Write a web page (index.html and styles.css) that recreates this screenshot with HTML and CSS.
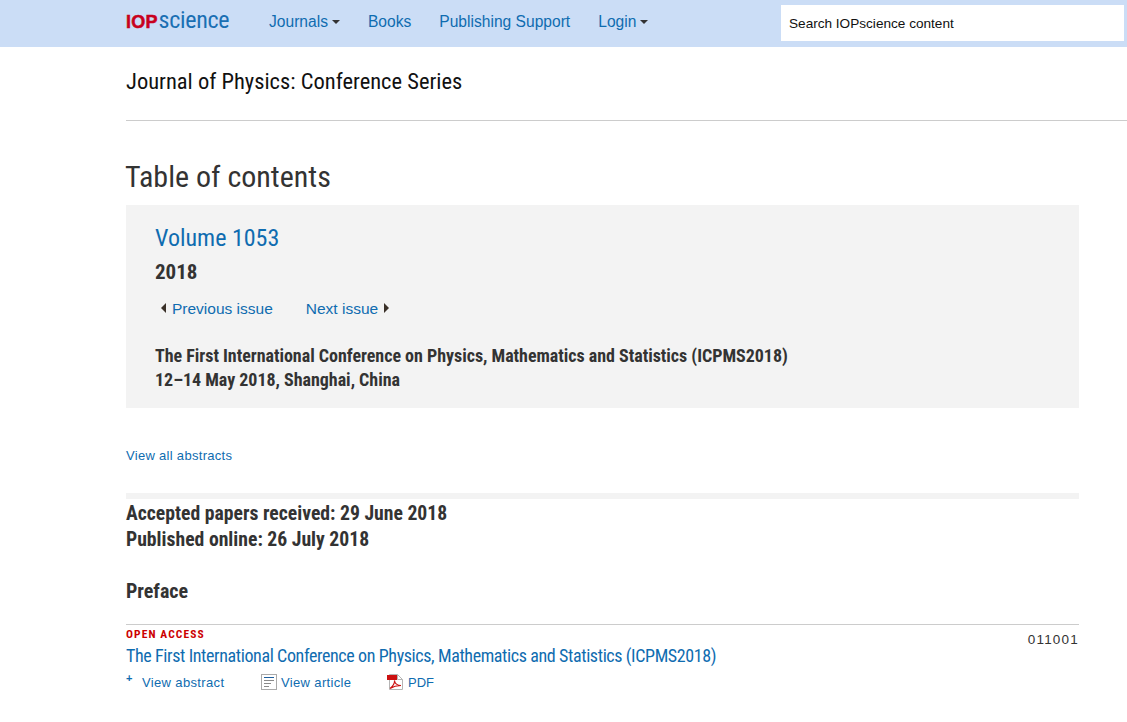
FILE: index.html
```html
<!DOCTYPE html>
<html lang="en">
<head>
<meta charset="utf-8">
<title>Journal of Physics: Conference Series - Table of contents</title>
<link rel="stylesheet" href="styles.css">
</head>
<body>
<header class="topbar">
  <a class="logo" href="#"><span class="logo-iop">IOP</span><span class="logo-sci">science</span></a>
  <nav class="nav">
    <a href="#">Journals<i class="caret"></i></a>
    <a href="#">Books</a>
    <a href="#">Publishing Support</a>
    <a href="#">Login<i class="caret"></i></a>
  </nav>
  <div class="search">Search IOPscience content</div>
</header>
<main class="page">
  <div class="journal">Journal of Physics: Conference Series</div>
  <h1 class="title">Table of contents</h1>
  <section class="issue">
    <h2 class="volume">Volume 1053</h2>
    <div class="year">2018</div>
    <div class="pager">
      <a href="#"><i class="tri-left"></i>Previous issue</a>
      <a href="#">Next issue<i class="tri-right"></i></a>
    </div>
    <div class="conf">The First International Conference on Physics, Mathematics and Statistics (ICPMS2018)<br>12–14 May 2018, Shanghai, China</div>
  </section>
  <a class="all" href="#">View all abstracts</a>
  <div class="rule"></div>
  <div class="dates">Accepted papers received: 29 June 2018<br>Published online: 26 July 2018</div>
  <h3 class="section">Preface</h3>
  <article class="paper">
    <div class="paper-head">
      <div class="oa">OPEN ACCESS</div>
      <div class="num">011001</div>
    </div>
    <a class="paper-title" href="#">The First International Conference on Physics, Mathematics and Statistics (ICPMS2018)</a>
    <div class="links">
      <a class="l-abs" href="#"><span class="plus">+</span>View abstract</a>
      <a class="l-art" href="#"><svg width="16" height="16" viewBox="0 0 16 16"><rect x="0.5" y="0.5" width="15" height="15" fill="#fff" stroke="#aaa"/><path d="M3 3.500h10" stroke="#1f5f9e" fill="none"/><path d="M3 6.500h10M3 9.500h7M3 12.500h5" stroke="#8a8a8a" fill="none"/></svg>View article</a>
      <a class="l-pdf" href="#"><svg width="16" height="16" viewBox="0 0 16 16"><path d="M2.500.5h8l5 5v10h-13z" fill="#fff" stroke="#b5b5b5"/><path d="M10.500.5v5h5" fill="none" stroke="#b5b5b5"/><rect x="0" y="1" width="10" height="5" fill="#cc1111"/><path d="M3 14.500c3-2 5-6 4.500-8 0 3 3 5 6.500 5-3 0-7.500.8-11 3z" fill="none" stroke="#cc1111" stroke-width="1.200"/></svg>PDF</a>
    </div>
  </article>
</main>
</body>
</html>
```
FILE: styles.css
```css
* { box-sizing: border-box; }
html, body { margin: 0; padding: 0; height: 722px; overflow: hidden; }
body { background: #fff; color: #333; font-family: "Liberation Sans", Arial, sans-serif; }
a { color: #0f6cb0; text-decoration: none; }
i { display: inline-block; }

.topbar { height: 47px; background: #cbddf6; display: flex; align-items: flex-start; padding-left: 126px; }
.logo { display: flex; align-items: baseline; width: 143px; padding-top: 7px; line-height: 27px; }
.logo-iop { color: #c8001e; font-weight: 900; font-size: 18px; font-family: "Liberation Sans", sans-serif; letter-spacing: .2px; -webkit-text-stroke: .5px #c8001e; margin-right: 1px; }
.logo-sci { color: #1a6fb3; font-size: 24px; font-family: "Roboto", sans-serif; font-stretch: 75%; letter-spacing: -.3px; }
.nav { display: flex; gap: 28px; width: 512px; padding-top: 13px; font-size: 15.6px; line-height: 18px; }
.caret { width: 0; height: 0; border: 4px solid transparent; border-top: 4px solid #333; border-bottom: 0; margin-left: 4px; vertical-align: 3px; }
.search { width: 343px; height: 36px; margin-top: 5px; background: #fff; color: #111; font-size: 13.6px; line-height: 37px; padding-left: 8px; }

.page { padding-left: 126px; }
.journal { height: 74px; padding-top: 20px; border-bottom: 1px solid #ccc; font-family: "Roboto", sans-serif; font-stretch: 75%; font-size: 22.5px; line-height: 28px; color: #111; }
.title { margin: 38px 0 10px -1px; height: 36px; font-family: "Roboto", sans-serif; font-stretch: 75%; font-weight: 400; font-size: 30px; line-height: 36px; color: #333; }
.issue { width: 953px; height: 203px; background: #f3f3f3; padding: 17px 29px 0; }
.volume { margin: 0; font-family: "Roboto", sans-serif; font-stretch: 75%; font-weight: 400; font-size: 24px; line-height: 32px; color: #0f6cb0; }
.year { margin-top: 6px; font-family: "Roboto", sans-serif; font-stretch: 75%; font-weight: 700; font-size: 21px; line-height: 24px; color: #333; }
.pager { display: flex; gap: 33px; margin-top: 15px; font-size: 15.5px; line-height: 20px; padding-left: 6px; }
.tri-left { width: 0; height: 0; border: 5px solid transparent; border-left: 0; border-right: 5px solid #3a3028; margin-right: 6px; vertical-align: 1px; }
.tri-right { width: 0; height: 0; border: 5px solid transparent; border-right: 0; border-left: 5px solid #3a3028; margin-left: 6px; vertical-align: 1px; }
.conf { margin-top: 25px; font-family: "Roboto", sans-serif; font-stretch: 75%; font-weight: 700; font-size: 18px; line-height: 24px; letter-spacing: -.03px; color: #333; }
.all { display: block; margin-top: 39px; font-size: 13px; line-height: 18px; letter-spacing: .3px; }
.rule { width: 953px; height: 6px; margin-top: 28px; background: #f3f3f3; }
.dates { margin-top: 2px; font-family: "Roboto", sans-serif; font-stretch: 75%; font-weight: 700; font-size: 19.7px; line-height: 26px; color: #333; }
.section { margin: 26px 0 0; font-family: "Roboto", sans-serif; font-stretch: 75%; font-weight: 700; font-size: 20px; line-height: 24px; color: #333; }
.paper { width: 953px; margin-top: 21px; border-top: 1px solid #ccc; }
.paper-head { display: flex; justify-content: space-between; }
.oa { padding-top: 3px; font-weight: 700; font-size: 11.5px; line-height: 13px; letter-spacing: 1.1px; color: #c00; font-family: "Roboto", sans-serif; font-stretch: 75%; }
.num { padding-top: 6px; font-size: 13.5px; line-height: 18px; letter-spacing: 1.2px; color: #333; }
.paper-title { display: block; margin-top: -5px; font-family: "Roboto", sans-serif; font-stretch: 75%; font-size: 18px; line-height: 24px; letter-spacing: -.39px; }
.links { display: flex; align-items: flex-end; margin-top: 6px; font-size: 13px; line-height: 18px; letter-spacing: .35px; }
.links a { display: flex; align-items: flex-end; }
.l-abs { width: 135px; }
.plus { width: 16px; font-weight: 700; font-size: 11px; line-height: 8px; align-self: flex-start; }
.l-art { width: 126px; }
.l-art svg { margin-right: 4px; margin-bottom: 2px; }
.l-pdf { letter-spacing: 0; }
.l-pdf svg { margin-right: 5px; margin-bottom: 2px; }
```
